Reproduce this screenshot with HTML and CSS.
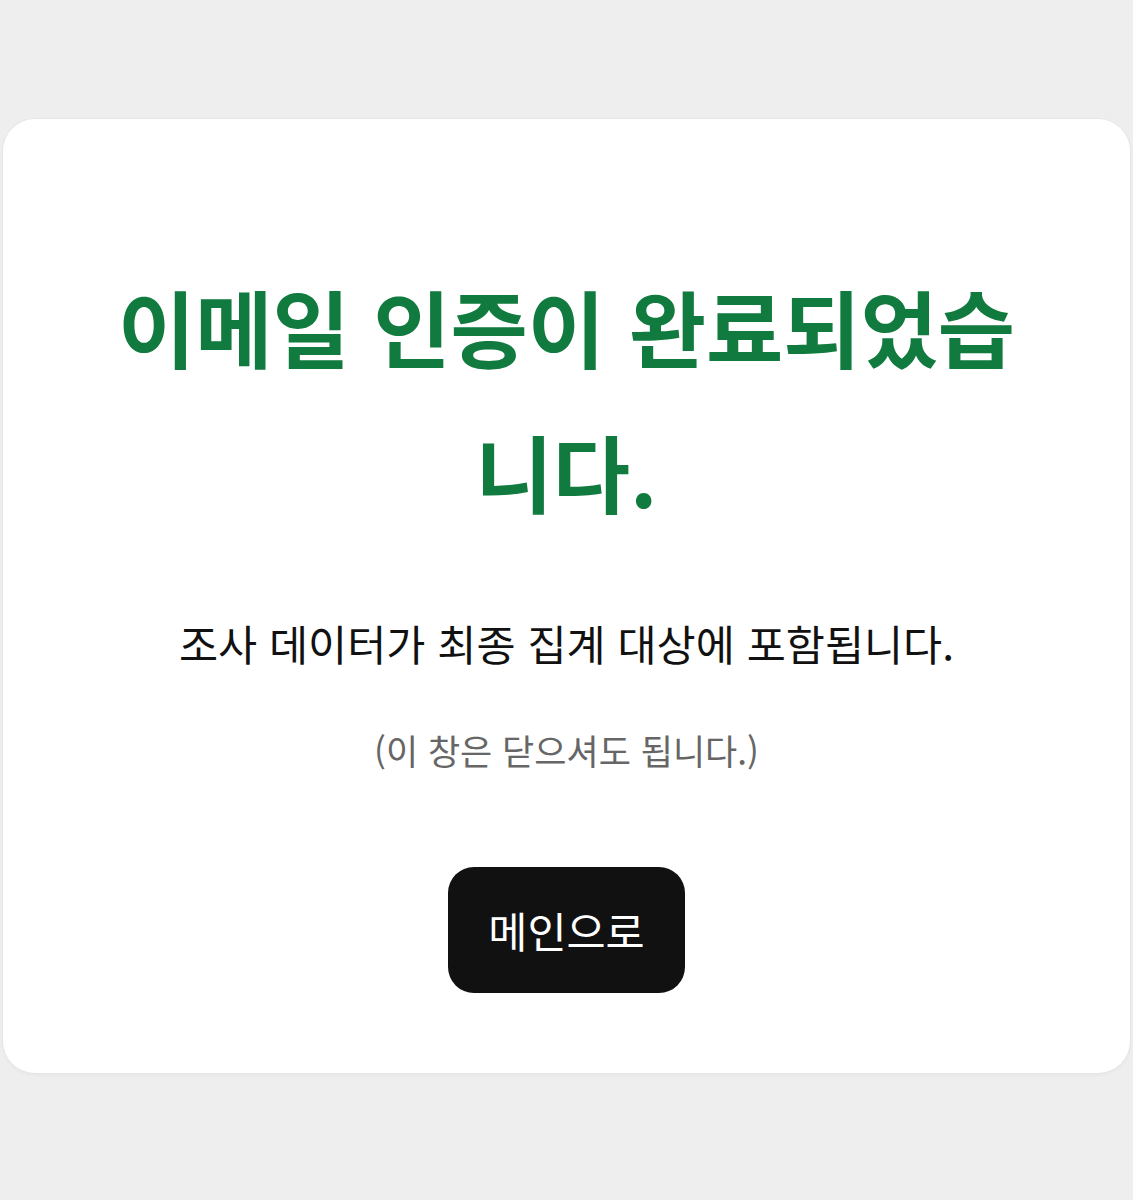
FILE: index.html
```html
<!DOCTYPE html>
<html lang="ko">
<head>
    <meta charset="UTF-8">
    <meta name="viewport" content="width=device-width, initial-scale=1.0">
    <title>이메일 인증 완료</title>
    <link rel="stylesheet" href="styles.css">
</head>
<body>
    <div class="card">
        <h1 class="title">이메일 인증이 완료되었습니다.</h1>
        <p class="message">조사 데이터가 최종 집계 대상에 포함됩니다.</p>
        <p class="note">(이 창은 닫으셔도 됩니다.)</p>
        <a class="main-btn" href="#">메인으로</a>
    </div>
</body>
</html>
```

FILE: styles.css
```css
body {
    margin: 0;
    padding: 119px 3px 0;
    background-color: #eeeeef;
    font-family: "Noto Sans CJK KR", "Noto Sans", sans-serif;
    min-height: 100vh;
    box-sizing: border-box;
}

.card {
    background-color: #fff;
    border-radius: 32px;
    box-shadow: 0 0 0 1px #e6e6e8, 0 2px 4px rgba(0, 0, 0, 0.04);
    padding: 134px 100px 80px;
    text-align: center;
}

.title {
    margin: 0;
    font-size: 84px;
    line-height: 145px;
    font-weight: 700;
    color: #117a3e;
}

.message {
    margin: 70px 0 0;
    font-size: 42.5px;
    line-height: 60px;
    color: #111;
}

.note {
    margin: 54px 0 0;
    font-size: 35px;
    line-height: 45px;
    color: #666;
}

.main-btn {
    display: inline-block;
    margin-top: 95px;
    padding: 0 40px;
    height: 126px;
    line-height: 126px;
    border-radius: 26px;
    background-color: #111;
    color: #fff;
    font-size: 42.5px;
    text-decoration: none;
}
```
